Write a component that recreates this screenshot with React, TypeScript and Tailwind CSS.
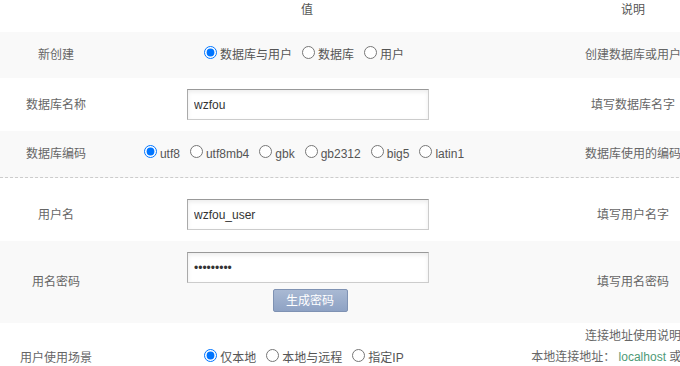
import React from "react";

const font = "font-['Liberation_Sans','Noto_Sans_CJK_SC',sans-serif]";

type RadioGroupProps = {
  name: string;
  options: string[];
  checked: number;
};

function RadioGroup({ name, options, checked }: RadioGroupProps) {
  return (
    <div className="pr-[6px] text-center text-[12px] text-[#555]">
      {options.map((opt, i) => (
        <label key={opt} className={i === 0 ? "" : "ml-[10px]"}>
          <input
            type="radio"
            name={name}
            defaultChecked={i === checked}
            className="m-0 mr-[3px] h-[13px] w-[13px]"
          />
          {opt}
        </label>
      ))}
    </div>
  );
}

function TextInput({ value, type = "text" }: { value: string; type?: string }) {
  return (
    <input
      type={type}
      defaultValue={value}
      className="h-[31px] w-[242px] border border-[#ccc] border-t-[#999] border-l-[#aaa] bg-white px-[6px] text-[12px] text-[#333] shadow-[inset_0_2px_4px_rgba(0,0,0,0.08)] outline-none"
    />
  );
}

const rowCols = "grid grid-cols-[112px_390px_262px] items-center";

export default function App() {
  return (
    <div className={`w-[680px] h-[366px] overflow-hidden bg-white ${font}`}>
      <div className="w-[764px] text-[12px] text-[#666]">
        {/* Header */}
        <div className={`${rowCols} h-[32px] items-start pt-[2px] leading-[16px] text-[#555]`}>
          <div />
          <div className="text-center">值</div>
          <div className="text-center">说明</div>
        </div>

        {/* 新创建 */}
        <div className={`${rowCols} h-[46px] bg-[#f9f9f9]`}>
          <div className="text-center">新创建</div>
          <RadioGroup name="create" options={["数据库与用户", "数据库", "用户"]} checked={0} />
          <div className="text-center">创建数据库或用户</div>
        </div>

        {/* 数据库名称 */}
        <div className={`${rowCols} h-[53px]`}>
          <div className="text-center">数据库名称</div>
          <div className="flex justify-center pl-[2px]">
            <TextInput value="wzfou" />
          </div>
          <div className="text-center">填写数据库名字</div>
        </div>

        {/* 数据库编码 */}
        <div className={`${rowCols} h-[47px] border-b border-dashed border-[#ccc] bg-[#f9f9f9]`}>
          <div className="text-center">数据库编码</div>
          <RadioGroup
            name="charset"
            options={["utf8", "utf8mb4", "gbk", "gb2312", "big5", "latin1"]}
            checked={0}
          />
          <div className="text-center">数据库使用的编码</div>
        </div>

        {/* 用户名 */}
        <div className={`${rowCols} h-[63px] pt-[10px]`}>
          <div className="text-center">用户名</div>
          <div className="flex justify-center pl-[2px]">
            <TextInput value="wzfou_user" />
          </div>
          <div className="text-center">填写用户名字</div>
        </div>

        {/* 用名密码 */}
        <div className={`${rowCols} h-[82px] bg-[#f9f9f9]`}>
          <div className="text-center">用名密码</div>
          <div className="flex flex-col items-center gap-[6px] pl-[2px]">
            <TextInput value="k8Hs2mQx9" type="password" />
            <button className="ml-[4px] h-[23px] w-[75px] rounded-[2px] border border-[#7f92b3] bg-gradient-to-b from-[#a9b9d3] to-[#8ea2c4] text-[12px] text-white">
              生成密码
            </button>
          </div>
          <div className="text-center">填写用名密码</div>
        </div>

        {/* 用户使用场景 */}
        <div className={`${rowCols} h-[69px]`}>
          <div className="text-center">用户使用场景</div>
          <RadioGroup name="scene" options={["仅本地", "本地与远程", "指定IP"]} checked={0} />
          <div className="self-start pt-[3px] text-center leading-[21px]">
            <div>连接地址使用说明</div>
            <div>
              本地连接地址： <span className="text-[#4e9a76]">localhost</span> 或{" "}
              <span className="text-[#4e9a76]">127.0.0.1</span>
            </div>
          </div>
        </div>
      </div>
    </div>
  );
}
